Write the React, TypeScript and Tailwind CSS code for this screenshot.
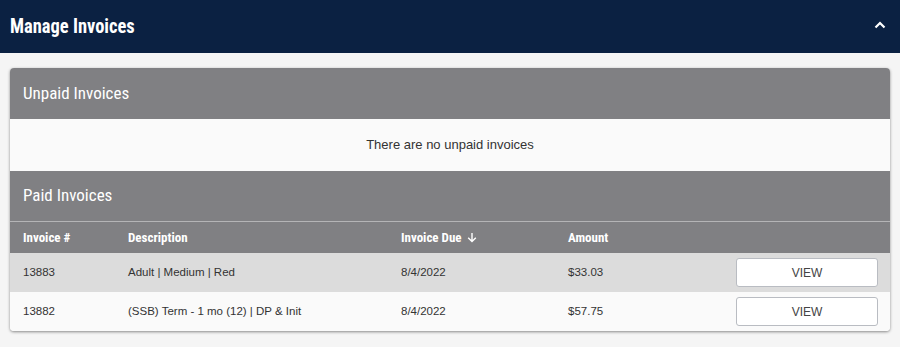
export default function App() {
  const rows = [
    { id: '13883', desc: 'Adult | Medium | Red', due: '8/4/2022', amount: '$33.03' },
    { id: '13882', desc: '(SSB) Term - 1 mo (12) | DP & Init', due: '8/4/2022', amount: '$57.75' },
  ]
  const condensed = { fontFamily: '"Liberation Sans Narrow", "Roboto Condensed", Roboto, sans-serif' }

  return (
    <div className="min-h-[347px] bg-[#f5f5f5]" style={{ fontFamily: '"Liberation Sans", Arial, sans-serif' }}>
      {/* Top bar */}
      <header className="flex h-[53px] items-center justify-between bg-[#0b2142] pl-[10px] pr-[14px]">
        <h1 className="origin-left scale-x-[0.88] text-[21px] font-bold text-white" style={condensed}>
          Manage Invoices
        </h1>
        <svg width="12" height="8" viewBox="0 0 12 8" className="mt-[-3px]">
          <path d="M1.5 6.5 L6 2 L10.5 6.5" fill="none" stroke="white" strokeWidth="2.2" />
        </svg>
      </header>

      <div className="px-[10px] pt-[15px]">
        <div className="overflow-hidden rounded-[4px] bg-[#fafafa] shadow-[0_1px_3px_rgba(0,0,0,0.45)]">
          <div className="flex h-[51px] items-center bg-[#808083] px-[13px]">
            <h2 className="text-[17px] text-white" style={condensed}>Unpaid Invoices</h2>
          </div>
          <div className="flex h-[52px] items-center justify-center text-[13px] text-[#333]">
            There are no unpaid invoices
          </div>
          <div className="flex h-[51px] items-center border-b border-[#b4b4b6] bg-[#808083] px-[13px]">
            <h2 className="text-[17px] text-white" style={condensed}>Paid Invoices</h2>
          </div>
          <table className="w-full border-collapse text-left">
            <thead>
              <tr className="h-[31px] bg-[#808083] text-[13px] font-bold text-white" style={condensed}>
                <th className="w-[118px] pl-[13px] font-bold">Invoice #</th>
                <th className="w-[273px] font-bold">Description</th>
                <th className="w-[167px] font-bold">
                  <span className="inline-flex items-center gap-[5px]">
                    Invoice Due
                    <svg width="10" height="11" viewBox="0 0 10 11">
                      <path d="M5 1 V9.5 M1.2 5.8 L5 9.6 L8.8 5.8" fill="none" stroke="white" strokeWidth="1.4" />
                    </svg>
                  </span>
                </th>
                <th className="font-bold">Amount</th>
                <th />
              </tr>
            </thead>
            <tbody>
              {rows.map((r, i) => (
                <tr key={r.id} className={`h-[39px] text-[11.5px] text-[#333] ${i === 0 ? 'bg-[#dcdcdc]' : 'bg-[#fafafa]'}`}>
                  <td className="pl-[13px]">{r.id}</td>
                  <td>{r.desc}</td>
                  <td>{r.due}</td>
                  <td>{r.amount}</td>
                  <td className="pr-[12px] text-right">
                    <button className="h-[29px] w-[142px] rounded-[3px] border border-[#b9bcc2] bg-white text-[12px] text-[#444]">
                      VIEW
                    </button>
                  </td>
                </tr>
              ))}
            </tbody>
          </table>
        </div>
      </div>
    </div>
  )
}
